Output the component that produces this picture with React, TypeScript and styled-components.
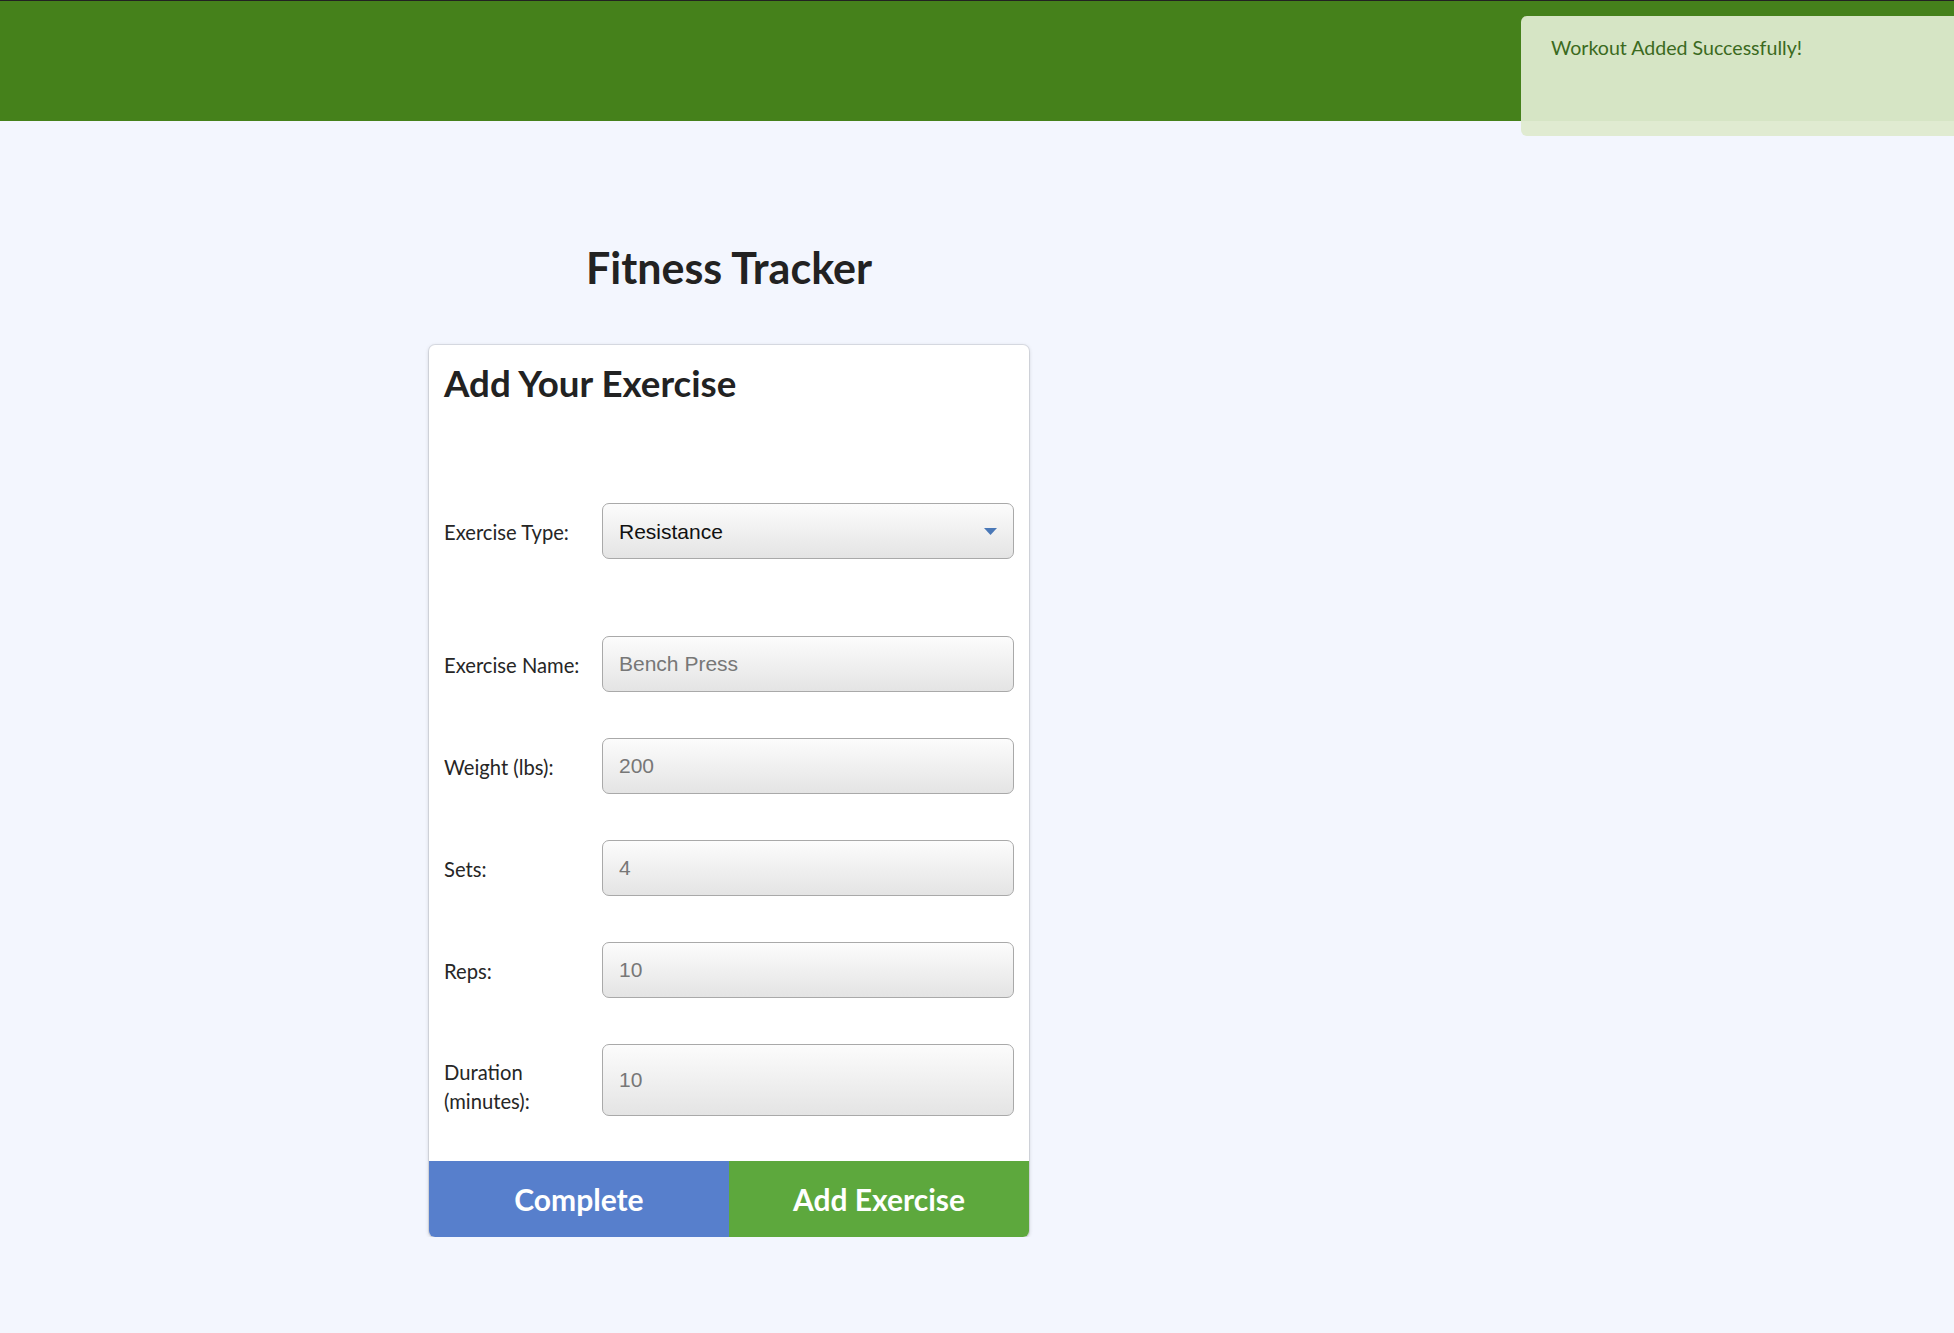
import React from "react";
import styled, { createGlobalStyle } from "styled-components";

const GlobalStyle = createGlobalStyle`
  html, body {
    margin: 0;
    padding: 0;
    background: #f3f6fe;
    overflow-x: hidden;
  }
  body {
    font-family: Lato, "Noto Sans", sans-serif;
    color: #222;
  }
  * { box-sizing: border-box; }
`;

const Header = styled.header`
  height: 121px;
  background: #45811b;
  border-top: 1px solid #222;
`;

const Toast = styled.div`
  position: absolute;
  top: 16px;
  left: 1521px;
  width: 460px;
  height: 120px;
  padding: 19px 30px;
  border-radius: 6px;
  background: rgba(222, 234, 207, 0.95);
  color: #3b6a1e;
  font-family: Lato, "Noto Sans", sans-serif;
  font-size: 19.6px;
  line-height: 26px;
`;

const Main = styled.main`
  display: flex;
`;

const Column = styled.section`
  width: 1458px;
  display: flex;
  flex-direction: column;
  align-items: center;
`;

const Title = styled.h1`
  margin: 122px 0 52px;
  font-family: Lato, sans-serif;
  font-weight: 700;
  font-size: 43px;
  line-height: 50px;
  color: #222;
`;

const Card = styled.div`
  width: 600px;
  background: #fff;
  border-radius: 6px;
  box-shadow: 0 0 0 1px rgba(0, 0, 0, 0.08), 0 1px 4px rgba(0, 0, 0, 0.18);
  overflow: hidden;
`;

const CardBody = styled.div`
  padding: 17px 15px 45px;
`;

const CardTitle = styled.h2`
  margin: 0 0 98px;
  font-family: Lato, sans-serif;
  font-weight: 700;
  font-size: 36.7px;
  line-height: 43px;
  color: #222;
`;

const Form = styled.div`
  display: flex;
  flex-direction: column;
  gap: 46px;
`;

const Row = styled.div<{ $extra?: number }>`
  display: flex;
  align-items: center;
  margin-bottom: ${(p) => p.$extra ?? 0}px;
`;

const Label = styled.label<{ $drop?: number }>`
  width: 158px;
  flex: none;
  padding-right: 12px;
  padding-top: ${(p) => p.$drop ?? 0}px;
  font-family: Lato, sans-serif;
  font-size: 20.2px;
  line-height: 29px;
  color: #262626;
`;

const Control = styled.div`
  position: relative;
  flex: 1;
`;

const fieldStyles = `
  width: 100%;
  border: 1px solid #a9a9a9;
  border-radius: 7px;
  background: linear-gradient(#fcfcfc, #e4e4e4);
  font-family: "Liberation Sans", Arial, sans-serif;
  font-size: 21px;
  padding: 0 16px;
  outline: none;
  margin: 0;
`;

const Select = styled.select`
  ${fieldStyles}
  height: 56px;
  color: #111;
  appearance: none;
  -webkit-appearance: none;
`;

const Input = styled.input<{ $tall?: boolean }>`
  ${fieldStyles}
  display: block;
  height: ${(p) => (p.$tall ? 72 : 56)}px;
  color: #111;
  &::placeholder {
    color: #777;
    opacity: 1;
  }
`;

const Arrow = styled.svg`
  position: absolute;
  right: 17px;
  top: 25px;
  pointer-events: none;
`;

const Actions = styled.div`
  display: flex;
`;

const ActionButton = styled.button<{ $color: string }>`
  flex: 1;
  height: 76px;
  border: none;
  margin: 0;
  background: ${(p) => p.$color};
  color: #fff;
  font-family: Lato, sans-serif;
  font-weight: 700;
  font-size: 30px;
  cursor: pointer;
`;

const fields = [
  { label: "Exercise Name:", placeholder: "Bench Press" },
  { label: "Weight (lbs):", placeholder: "200" },
  { label: "Sets:", placeholder: "4" },
  { label: "Reps:", placeholder: "10" },
];

export default function App() {
  return (
    <>
      <GlobalStyle />
      <Header />
      <Toast>Workout Added Successfully!</Toast>
      <Main>
        <Column>
          <Title>Fitness Tracker</Title>
          <Card>
            <CardBody>
              <CardTitle>Add Your Exercise</CardTitle>
              <Form>
                <Row $extra={31}>
                  <Label $drop={2}>Exercise Type:</Label>
                  <Control>
                    <Select defaultValue="resistance">
                      <option value="resistance">Resistance</option>
                      <option value="cardio">Cardio</option>
                    </Select>
                    <Arrow width="13" height="7" viewBox="0 0 13 7">
                      <path d="M0 0 H13 L6.5 7 Z" fill="#4a78b7" />
                    </Arrow>
                  </Control>
                </Row>
                {fields.map((f) => (
                  <Row key={f.label}>
                    <Label $drop={2}>{f.label}</Label>
                    <Control>
                      <Input placeholder={f.placeholder} />
                    </Control>
                  </Row>
                ))}
                <Row>
                  <Label $drop={14}>Duration (minutes):</Label>
                  <Control>
                    <Input $tall placeholder="10" />
                  </Control>
                </Row>
              </Form>
            </CardBody>
            <Actions>
              <ActionButton $color="#577fcc">Complete</ActionButton>
              <ActionButton $color="#5da83d">Add Exercise</ActionButton>
            </Actions>
          </Card>
        </Column>
      </Main>
    </>
  );
}
